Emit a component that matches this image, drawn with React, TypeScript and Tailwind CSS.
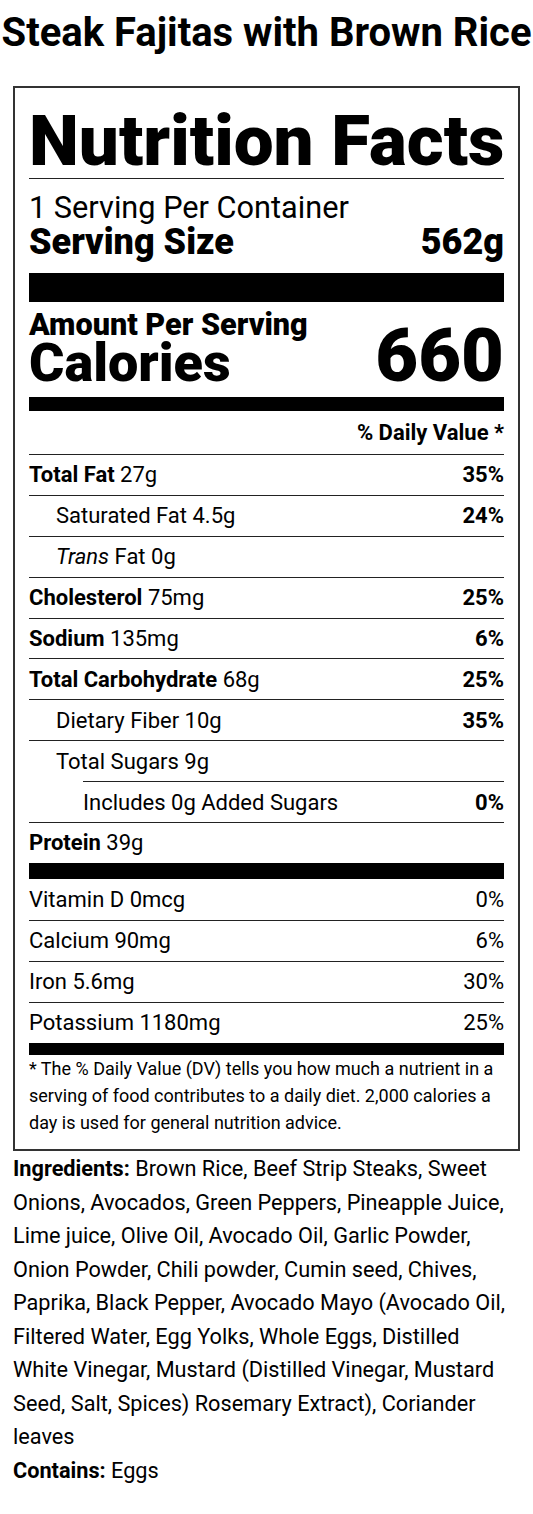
const nutrients = [
  { name: "Total Fat", amount: "27g", dv: "35%", bold: true },
  { name: "Saturated Fat", amount: "4.5g", dv: "24%", indent: 1 },
  { name: "Trans", amount: "Fat 0g", indent: 1, italic: true },
  { name: "Cholesterol", amount: "75mg", dv: "25%", bold: true },
  { name: "Sodium", amount: "135mg", dv: "6%", bold: true },
  { name: "Total Carbohydrate", amount: "68g", dv: "25%", bold: true },
  { name: "Dietary Fiber", amount: "10g", dv: "35%", indent: 1 },
  { name: "Total Sugars", amount: "9g", indent: 1 },
  { name: "Includes 0g Added Sugars", amount: "", dv: "0%", indent: 2 },
  { name: "Protein", amount: "39g", bold: true },
];

const vitamins = [
  { name: "Vitamin D 0mcg", dv: "0%" },
  { name: "Calcium 90mg", dv: "6%" },
  { name: "Iron 5.6mg", dv: "30%" },
  { name: "Potassium 1180mg", dv: "25%" },
];

function Row({ item }: { item: any }) {
  return (
    <div className={item.indent === 2 ? "pl-[54px]" : ""}>
      <div
        className={`flex h-[40.9px] items-center justify-between border-t border-[#222] ${
          item.indent === 1 ? "pl-[27px]" : ""
        }`}
      >
        <span>
          {item.bold && <span className="font-bold">{item.name}</span>}
          {item.italic && <span className="italic">{item.name}</span>}
          {!item.bold && !item.italic && item.name}
          {item.amount && " " + item.amount}
        </span>
        {item.dv && <span className="font-bold">{item.dv}</span>}
      </div>
    </div>
  );
}

export default function App() {
  return (
    <div className="w-[533px] bg-white pb-[30px] text-black font-['Roboto',sans-serif]">
      <h1 className="pt-[9px] text-center text-[40px] leading-[48px] font-bold">
        Steak Fajitas with Brown Rice
      </h1>

      <div className="mx-[13px] mt-[29px] border-2 border-[#333] px-[14px] pb-[12.7px]">
        <div className="whitespace-nowrap pt-[17.2px] text-[71px] leading-[71px] font-black">
          Nutrition Facts
        </div>
        <div className="mt-[1.8px] border-t border-[#222]" />
        <div className="mt-[14.5px] text-[30.7px] leading-[30px]">1 Serving Per Container</div>
        <div className="mt-[1.2px] flex justify-between text-[36px] leading-[34px] font-black">
          <span>Serving Size</span>
          <span>562g</span>
        </div>
        <div className="mt-[14.6px] h-[29px] bg-black" />

        <div className="flex items-end justify-between pt-[9.4px] pb-[10.4px]">
          <div className="font-black">
            <div className="text-[30.6px] leading-[26px]">Amount Per Serving</div>
            <div className="mt-[2.6px] text-[54px] leading-[46px]">Calories</div>
          </div>
          <div className="text-[74px] leading-[60px] font-black">660</div>
        </div>
        <div className="h-[14px] bg-black" />

        <div className="text-[22px]">
          <div className="flex h-[43.3px] items-center justify-end font-bold">
            % Daily Value *
          </div>
          {nutrients.map((n) => (
            <Row key={n.name} item={n} />
          ))}
          <div className="h-[16px] bg-black" />
          {vitamins.map((v, i) => (
            <div
              key={v.name}
              className={`flex h-[41px] items-center justify-between ${
                i > 0 ? "border-t border-[#222]" : ""
              }`}
            >
              <span>{v.name}</span>
              <span>{v.dv}</span>
            </div>
          ))}
          <div className="h-[12.5px] bg-black" />
        </div>

        <p className="text-[18px] leading-[27px]">
          * The % Daily Value (DV) tells you how much a nutrient in a serving of food
          contributes to a daily diet. 2,000 calories a day is used for general nutrition
          advice.
        </p>
      </div>

      <div className="pl-[13px] pr-[16px] pt-[1px] text-[21.7px] leading-[33.5px]">
        <p>
          <span className="font-bold">Ingredients:</span> Brown Rice, Beef Strip Steaks,
          Sweet Onions, Avocados, Green Peppers, Pineapple Juice, Lime juice, Olive Oil,
          Avocado Oil, Garlic Powder, Onion Powder, Chili powder, Cumin seed, Chives,
          Paprika, Black Pepper, Avocado Mayo (Avocado Oil, Filtered Water, Egg Yolks, Whole
          Eggs, Distilled White Vinegar, Mustard (Distilled Vinegar, Mustard Seed, Salt,
          Spices) Rosemary Extract), Coriander leaves
        </p>
        <p>
          <span className="font-bold">Contains:</span> Eggs
        </p>
      </div>
    </div>
  );
}
